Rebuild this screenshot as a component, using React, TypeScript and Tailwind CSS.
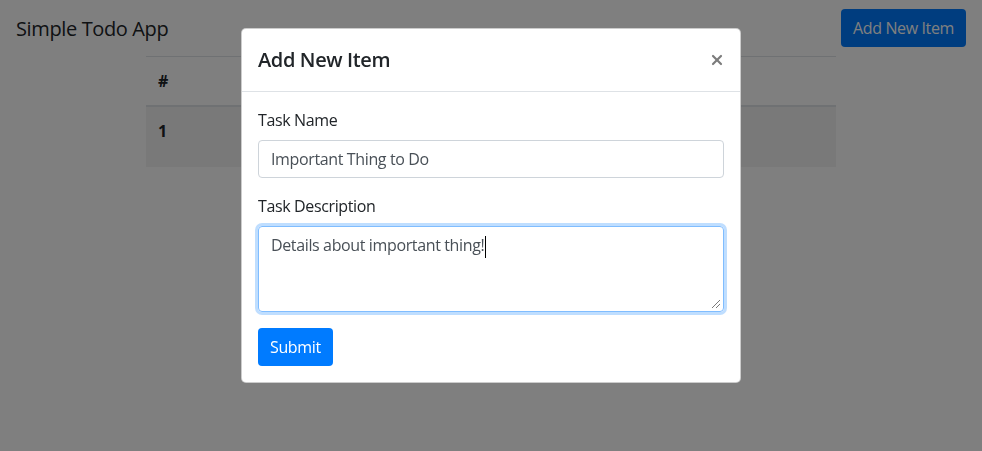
import { X } from 'lucide-react';

const font = "font-['Segoe_UI','Open_Sans','Noto_Sans',sans-serif] tracking-[-0.023em]";

function ResizeGrip() {
  return (
    <svg className="absolute bottom-[3px] right-[3px]" width="9" height="9" viewBox="0 0 9 9">
      <line x1="1" y1="9" x2="9" y2="1" stroke="#7a7a7a" strokeWidth="1" />
      <line x1="5" y1="9" x2="9" y2="5" stroke="#7a7a7a" strokeWidth="1" />
    </svg>
  );
}

export default function App() {
  return (
    <div className={`${font} min-h-screen bg-white text-[#212529]`}>
      <nav className="h-14 flex items-center justify-between px-4">
        <span className="text-xl leading-[30px] pt-0.5">Simple Todo App</span>
        <button className="h-[38px] px-3 rounded bg-[#007bff] text-white text-base">
          Add New Item
        </button>
      </nav>

      <div className="max-w-[720px] mx-auto px-[15px]">
        <table className="w-full border-collapse text-base">
          <thead>
            <tr>
              <th className="text-left font-bold p-3 border-t border-[#dee2e6] border-b-2 leading-6">#</th>
              <th className="text-left font-bold p-3 border-t border-[#dee2e6] border-b-2 leading-6"></th>
              <th className="text-left font-bold p-3 border-t border-[#dee2e6] border-b-2 leading-6"></th>
            </tr>
          </thead>
          <tbody>
            <tr className="bg-black/5">
              <th className="text-left align-top font-bold p-3 border-t border-[#dee2e6] leading-6 h-[61px]">1</th>
              <td className="p-3 border-t border-[#dee2e6]"></td>
              <td className="p-3 border-t border-[#dee2e6]"></td>
            </tr>
          </tbody>
        </table>
      </div>

      <div className="fixed inset-0 bg-black/50"></div>

      <div className="fixed inset-0 flex justify-center pt-7">
        <div className="w-[500px] h-fit bg-white border border-black/20 rounded-[5px]">
          <div className="flex items-center justify-between p-4 border-b border-[#dee2e6]">
            <h5 className="text-xl font-semibold leading-[30px]">Add New Item</h5>
            <button className="text-[#7c7c7c] -mr-[1px]">
              <X size={16} strokeWidth={3.2} />
            </button>
          </div>
          <div className="p-4">
            <div className="mb-4">
              <label className="block mb-2 leading-6">Task Name</label>
              <div className="h-[38px] border border-[#ced4da] rounded px-3 flex items-center text-[#495057] leading-6">
                Important Thing to Do
              </div>
            </div>
            <div className="mb-4">
              <label className="block mb-2 leading-6">Task Description</label>
              <div className="relative h-[86px] border border-[#80bdff] rounded px-3 py-1.5 text-[#495057] leading-6 shadow-[0_0_0_3px_rgba(0,123,255,0.25)]">
                Details about important thing!
                <span className="inline-block w-px h-[22px] bg-black align-middle ml-px"></span>
                <ResizeGrip />
              </div>
            </div>
            <button className="h-[38px] px-3 rounded bg-[#007bff] text-white leading-6">Submit</button>
          </div>
        </div>
      </div>
    </div>
  );
}
